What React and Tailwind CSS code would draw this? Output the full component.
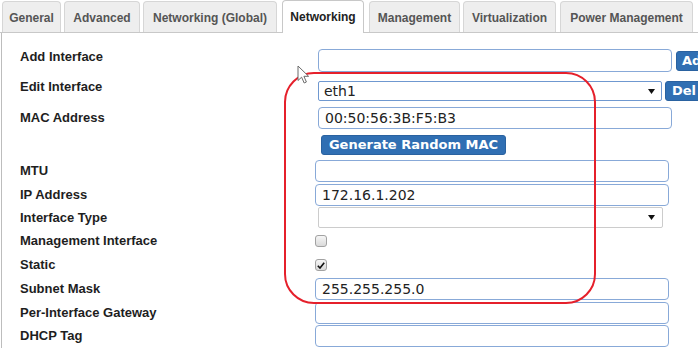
import React from 'react';

const labelFont = "font-['Liberation_Sans',Arial,sans-serif]";
const fieldFont = "font-['DejaVu_Sans',Verdana,sans-serif]";

function Tab({ label, width, active }) {
  if (active) {
    return (
      <div
        className={`flex items-center justify-center h-[33px] -mb-px bg-white border border-b-0 border-[#c8c8c8] rounded-t-[4px] text-[12px] font-bold text-[#222] ${width}`}
      >
        {label}
      </div>
    );
  }
  return (
    <div
      className={`flex items-center justify-center pt-[2px] h-[31px] bg-[#eeeeee] border border-b-0 border-[#d6d6d6] rounded-t-[4px] text-[12px] font-bold text-[#555] ${width}`}
    >
      {label}
    </div>
  );
}

function TextField({ value, className = '' }) {
  return (
    <div
      className={`flex items-center shrink-0 w-[354px] h-full px-[6px] bg-white border border-[#88a9d8] rounded-[4px] text-[14px] text-[#222] ${fieldFont} ${className}`}
    >
      {value}
    </div>
  );
}

function Caret() {
  return (
    <svg width="7" height="5" viewBox="0 0 7 5" className="shrink-0">
      <polygon points="0,0 7,0 3.5,5" fill="#111" />
    </svg>
  );
}

function Label({ children, className = '' }) {
  return (
    <div className={`w-[313px] shrink-0 pl-[18px] text-[13px] font-bold text-[#1e1e1e] ${className}`}>
      {children}
    </div>
  );
}

function Checkbox({ checked }) {
  return (
    <div className="flex items-center justify-center w-[12px] h-[12px] border border-[#a2a2a2] rounded-[3px] bg-gradient-to-b from-[#f6f6f6] to-[#dadada]">
      {checked && (
        <svg width="8" height="7" viewBox="0 0 8 7">
          <path d="M0.8 3.8 L3 6 L7.2 0.8" fill="none" stroke="#111" strokeWidth="1.6" />
        </svg>
      )}
    </div>
  );
}

export default function App() {
  return (
    <div className={`relative w-[698px] h-[348px] overflow-hidden bg-white ${labelFont}`}>
      {/* tab strip */}
      <div className="flex items-end h-[33px] pl-[2px] border-b border-[#c8c8c8]">
        <Tab label="General" width="w-[59px]" />
        <div className="w-[3px]" />
        <Tab label="Advanced" width="w-[76px]" />
        <div className="w-[3px]" />
        <Tab label="Networking (Global)" width="w-[134px]" />
        <div className="w-[5px]" />
        <Tab label="Networking" width="w-[82px]" active />
        <div className="w-[5px]" />
        <Tab label="Management" width="w-[91px]" />
        <div className="w-[3px]" />
        <Tab label="Virtualization" width="w-[93px]" />
        <div className="w-[4px]" />
        <Tab label="Power Management" width="w-[133px]" />
      </div>

      {/* form panel */}
      <div className="ml-px h-[315px] border-l border-[#bdbdbd] flex flex-col">
        <div className="flex items-center h-[23px] mt-[16px]">
          <Label className="pb-[8px]">Add Interface</Label>
          <TextField value="" className="ml-[3px]" />
          <div className={`shrink-0 ml-[4px] mt-px h-[20px] w-[44px] flex items-center pl-[5px] bg-[#306fb3] border border-[#2a62a0] rounded-[3px] text-white text-[13px] font-bold ${fieldFont}`}>
            Add
          </div>
        </div>

        <div className="flex items-center h-[20px] mt-[9px]">
          <Label className="pb-[8px]">Edit Interface</Label>
          <div className={`flex items-center justify-between shrink-0 ml-[3px] w-[344px] h-full pl-[5px] pr-[6px] bg-white border border-[#6f98d0] rounded-[2px] text-[14px] text-[#222] ${fieldFont}`}>
            <span>eth1</span>
            <Caret />
          </div>
          <div className={`shrink-0 ml-[3px] h-[20px] w-[44px] flex items-center pl-[6px] bg-[#306fb3] border border-[#2a62a0] rounded-[3px] text-white text-[13px] font-bold ${fieldFont}`}>
            Del
          </div>
        </div>

        <div className="flex items-center h-[22px] mt-[6px]">
          <Label>MAC Address</Label>
          <TextField value="00:50:56:3B:F5:B3" className="ml-[3px]" />
        </div>

        <div className="flex items-center h-[20px] mt-[6px]">
          <div className="w-[313px] shrink-0" />
          <div className={`ml-[6px] w-[185px] h-full flex items-center justify-center bg-[#306fb3] border border-[#2a62a0] rounded-[3px] text-white text-[13px] font-bold ${fieldFont}`}>
            Generate Random MAC
          </div>
        </div>

        <div className="flex items-center h-[22px] mt-[5px]">
          <Label>MTU</Label>
          <TextField value="" />
        </div>

        <div className="flex items-center h-[22px] mt-[2px]">
          <Label>IP Address</Label>
          <TextField value="172.16.1.202" />
        </div>

        <div className="flex items-center h-[21px] mt-[1px]">
          <Label>Interface Type</Label>
          <div className="flex items-center justify-end shrink-0 ml-[3px] w-[345px] h-full pr-[7px] bg-white border border-[#cccccc] rounded-[2px]">
            <Caret />
          </div>
        </div>

        <div className="flex items-center h-[24px] mt-[1px]">
          <Label>Management Interface</Label>
          <Checkbox />
        </div>

        <div className="flex items-center h-[24px]">
          <Label>Static</Label>
          <Checkbox checked />
        </div>

        <div className="flex items-center h-[22px] mt-[1px]">
          <Label>Subnet Mask</Label>
          <TextField value="255.255.255.0" />
        </div>

        <div className="flex items-center h-[22px] mt-[2px]">
          <Label>Per-Interface Gateway</Label>
          <TextField value="" />
        </div>

        <div className="flex items-center h-[22px] mt-px">
          <Label>DHCP Tag</Label>
          <TextField value="" />
        </div>
      </div>

      {/* red annotation */}
      <div className="pointer-events-none absolute left-[284px] top-[72px] w-[312px] h-[232px] rounded-[30px] border-2 border-[#e5202b]" />

      {/* mouse pointer */}
      <svg className="absolute left-[297px] top-[65px]" width="14" height="20" viewBox="0 0 14 20">
        <path
          d="M1 1 L1 15.5 L4.6 12.2 L7.2 18 L9.4 17 L6.9 11.3 L11.6 11.3 Z"
          fill="#fff"
          stroke="#6b6b6b"
          strokeWidth="1"
          strokeLinejoin="round"
        />
      </svg>
    </div>
  );
}
